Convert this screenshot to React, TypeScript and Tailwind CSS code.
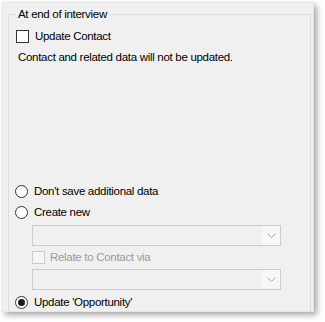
import React from "react";

const Chevron = () => (
  <svg width="9" height="5" viewBox="0 0 9 5" className="block">
    <path d="M0.5 0.5 L4.5 4.5 L8.5 0.5" fill="none" stroke="#a6a6a6" strokeWidth="1" />
  </svg>
);

const Dropdown = () => (
  <div className="ml-[23px] flex h-[21px] w-[249px] border border-[#cccccc] bg-[#f0f0f0]">
    <div className="flex-1" />
    <div className="flex w-[18px] items-center justify-center bg-[#f7f7f7]">
      <Chevron />
    </div>
  </div>
);

const Radio = ({ checked, label }: { checked?: boolean; label: string }) => (
  <div className="ml-[6px] flex h-[13px] items-center">
    <div className="flex h-[13px] w-[13px] items-center justify-center rounded-full border border-[#333333] bg-white">
      {checked && <div className="h-[7px] w-[7px] rounded-full bg-[#1a1a1a]" />}
    </div>
    <span className="ml-[6px] leading-[13px] text-black">{label}</span>
  </div>
);

export default function App() {
  return (
    <div className="h-[322px] w-[325px] bg-white pl-[2px] pt-[2px] font-['Liberation_Sans',Arial,sans-serif] text-[11.5px] tracking-[-0.3px]">
      <div className="h-[310px] w-[312px] overflow-hidden border border-[#e6e6e6] bg-[#f0f0f0] shadow-[3px_3px_6px_rgba(0,0,0,0.35)]">
        <fieldset className="ml-[5px] mt-[4px] h-[340px] w-[303px] border border-[#dcdcdc] p-0">
          <legend className="ml-[7px] h-[14px] px-[2px] leading-[14px] text-black">At end of interview</legend>
          <div className="flex flex-col">
            <div className="ml-[7px] mt-[9px] flex h-[13px] items-center">
              <div className="h-[13px] w-[13px] border border-[#333333] bg-white" />
              <span className="ml-[6px] leading-[13px] text-black">Update Contact</span>
            </div>
            <div className="ml-[9px] mt-[7px] h-[14px] leading-[14px] text-black">
              Contact and related data will not be updated.
            </div>
            <div className="mt-[121px]">
              <Radio label="Don't save additional data" />
            </div>
            <div className="mt-[8px]">
              <Radio label="Create new" />
            </div>
            <div className="mt-[6px]">
              <Dropdown />
            </div>
            <div className="ml-[23px] mt-[5px] flex h-[13px] items-center">
              <div className="h-[13px] w-[13px] border border-[#cccccc] bg-[#f7f7f7]" />
              <span className="ml-[5px] leading-[13px] text-[#9a9a9a]">Relate to Contact via</span>
            </div>
            <div className="mt-[5px]">
              <Dropdown />
            </div>
            <div className="mt-[6px]">
              <Radio checked label="Update 'Opportunity'" />
            </div>
          </div>
        </fieldset>
      </div>
    </div>
  );
}
